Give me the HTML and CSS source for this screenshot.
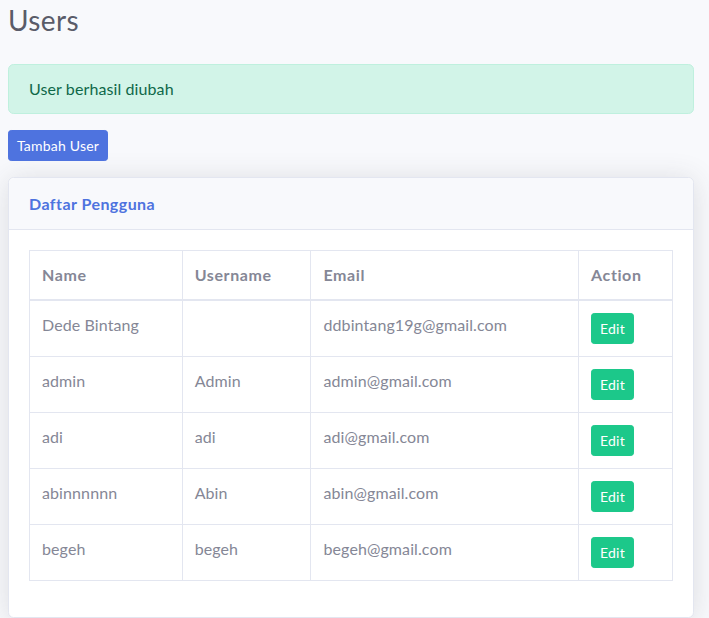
FILE: index.html
```html
<!DOCTYPE html>
<html lang="id">
<head>
<meta charset="utf-8">
<title>Users</title>
<link rel="stylesheet" href="styles.css">
</head>
<body>
<div class="page">
  <h1 class="page-title">Users</h1>
  <div class="alert">User berhasil diubah</div>
  <div class="actions"><button class="btn btn-primary">Tambah User</button></div>
  <div class="card">
    <div class="card-header"><h6 class="card-title">Daftar Pengguna</h6></div>
    <div class="card-body">
      <table class="table">
        <thead>
          <tr><th class="c-name">Name</th><th class="c-user">Username</th><th class="c-email">Email</th><th class="c-act">Action</th></tr>
        </thead>
        <tbody>
          <tr><td>Dede Bintang</td><td></td><td>ddbintang19g@gmail.com</td><td><button class="btn btn-success">Edit</button></td></tr>
          <tr><td>admin</td><td>Admin</td><td>admin@gmail.com</td><td><button class="btn btn-success">Edit</button></td></tr>
          <tr><td>adi</td><td>adi</td><td>adi@gmail.com</td><td><button class="btn btn-success">Edit</button></td></tr>
          <tr><td>abinnnnnn</td><td>Abin</td><td>abin@gmail.com</td><td><button class="btn btn-success">Edit</button></td></tr>
          <tr><td>begeh</td><td>begeh</td><td>begeh@gmail.com</td><td><button class="btn btn-success">Edit</button></td></tr>
        </tbody>
      </table>
    </div>
  </div>
</div>
</body>
</html>
```
FILE: styles.css
```css
* { box-sizing: border-box; }
html, body { margin: 0; padding: 0; }
body {
  background: #f8f9fc;
  color: #858796;
  font-family: Lato, "Noto Sans", sans-serif;
  font-size: 16px;
  line-height: 1.5;
}
.page { padding: 4px 15px 0 8px; }
.page-title {
  margin: 0 0 26px;
  font-size: 28px;
  font-weight: 400;
  line-height: 1.2;
  letter-spacing: 0.4px;
  color: #5a5c69;
}
.alert {
  background: #d2f4e8;
  border: 1px solid #bff0de;
  color: #0f6848;
  border-radius: 5.6px;
  padding: 12px 20px;
  margin-bottom: 16px;
  letter-spacing: 0.1px;
}
.actions { margin-bottom: 16px; }
.btn {
  font-family: inherit;
  border: 1px solid transparent;
  color: #fff;
  font-size: 14px;
  line-height: 1.5;
  padding: 4px 8px;
  border-radius: 3.2px;
  letter-spacing: 0.2px;
  cursor: pointer;
}
.btn-primary { background: #4e73df; border-color: #4e73df; }
.btn-success { background: #1cc88a; border-color: #1cc88a; }
.card {
  background: #fff;
  border: 1px solid #e3e6f0;
  border-radius: 5.6px;
  box-shadow: 0 2.4px 28px 0 rgba(58, 59, 69, 0.15);
}
.card-header {
  background: #f8f9fc;
  border-bottom: 1px solid #e3e6f0;
  padding: 16px 20px;
  border-radius: 5.6px 5.6px 0 0;
}
.card-title {
  margin: 0;
  font-size: 16px;
  font-weight: 700;
  line-height: 1.2;
  letter-spacing: 0.45px;
  color: #4e73df;
}
.card-body { padding: 20px 20px 36px; }
.table {
  width: 100%;
  border-collapse: collapse;
  color: #858796;
}
.table th, .table td {
  border: 1px solid #e3e6f0;
  padding: 12px;
  text-align: left;
  vertical-align: top;
}
.table td { letter-spacing: 0.1px; }
.table thead th { border-bottom-width: 2px; font-weight: 700; letter-spacing: 0.6px; }
.c-name { width: 153px; }
.c-user { width: 129px; }
.c-email { width: 268px; }
.c-act { width: 94px; }
```
